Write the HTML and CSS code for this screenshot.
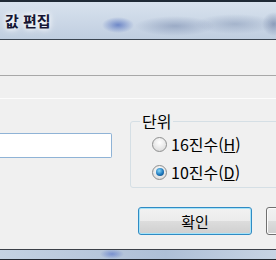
FILE: index.html
```html
<!DOCTYPE html>
<html lang="ko">
<head>
    <meta charset="UTF-8">
    <title>값 편집</title>
    <link rel="stylesheet" href="styles.css">
</head>
<body>
    <div class="window">
        <!-- 제목 표시줄 -->
        <div class="titlebar"><span class="title">값 편집</span></div>

        <div class="client">
            <div class="name-row"></div>
            <div class="label-row"></div>

            <div class="data-row">
                <input class="value-box" type="text" value="">
                <fieldset class="unit-group">
                    <legend>단위</legend>
                    <label class="option"><span class="radio"></span><span>16진수(<u>H</u>)</span></label>
                    <label class="option"><span class="radio checked"></span><span>10진수(<u>D</u>)</span></label>
                </fieldset>
            </div>

            <div class="button-row">
                <button class="btn default">확인</button>
                <button class="btn" aria-label="취소"></button>
            </div>
        </div>

        <div class="frame-bottom"></div>
    </div>
</body>
</html>
```

FILE: styles.css
```css
body {
    margin: 0;
    width: 276px;
    height: 260px;
    overflow: hidden;
    background: #f0f0f0;
    font-family: "Noto Sans CJK KR", "Noto Sans", sans-serif;
    color: #000;
}

.window {
    display: flex;
    flex-direction: column;
    width: 276px;
}

.titlebar {
    height: 37px;
    border-top: 2px solid #1f2a36;
    border-bottom: 1px solid #3a4450;
    display: flex;
    align-items: center;
    padding-left: 5px;
    background:
        radial-gradient(ellipse 16px 8px at 118px 23px, rgba(80, 110, 190, 0.75), transparent),
        radial-gradient(ellipse 40px 10px at 175px 24px, rgba(100, 120, 160, 0.45), transparent),
        radial-gradient(ellipse 40px 10px at 235px 22px, rgba(110, 130, 165, 0.4), transparent),
        radial-gradient(ellipse 12px 12px at 274px 22px, rgba(90, 110, 150, 0.55), transparent),
        linear-gradient(#d8e2ee, #c0cee0);
}

.title {
    font-size: 15px;
    font-weight: 700;
    color: #161634;
    text-shadow: 0 0 5px #fff, 0 0 8px #fff;
}

.client {
    display: flex;
    flex-direction: column;
}

.name-row {
    height: 35px;
    border-bottom: 1px solid #a8a8a8;
}

.label-row {
    height: 22px;
    border-bottom: 1px solid #fcfcfc;
}

.data-row {
    display: flex;
    align-items: flex-start;
    gap: 18px;
}

.value-box {
    margin: 34px 0 0 0;
    width: 112px;
    height: 25px;
    box-sizing: border-box;
    border: 1px solid #8fb3d6;
    border-left: none;
    border-radius: 0 2px 2px 0;
    background: #fff;
    padding: 0;
    flex: none;
}

.unit-group {
    margin: 14px 0 0 0;
    width: 200px;
    min-width: 0;
    flex: none;
    padding: 1px 0 1px 21px;
    border: 1px solid #d5dfe5;
    border-radius: 3px;
}

.unit-group legend {
    padding: 0 2px;
    margin-left: -12px;
    font-size: 16px;
    line-height: 16px;
}

.option {
    display: flex;
    align-items: center;
    gap: 4px;
    height: 28px;
    font-size: 16px;
    line-height: 28px;
}

.radio {
    width: 15px;
    height: 15px;
    box-sizing: border-box;
    border-radius: 50%;
    border: 1px solid #8e8f8f;
    background: radial-gradient(circle at 50% 35%, #fff, #e2e2e2 70%, #cdcdcd);
    display: flex;
    align-items: center;
    justify-content: center;
    flex: none;
}

.radio.checked::after {
    content: '';
    width: 8px;
    height: 8px;
    border-radius: 50%;
    background: radial-gradient(circle at 40% 35%, #8ad8f8, #1d78bd 55%, #0b3c6a);
}

.button-row {
    display: flex;
    gap: 14px;
    padding: 19px 0 0 138px;
}

.btn {
    flex: none;
    width: 114px;
    height: 28px;
    box-sizing: border-box;
    padding: 0;
    border: 1px solid #707070;
    border-radius: 3px;
    background: linear-gradient(#f2f2f2 0%, #ebebeb 50%, #dddddd 50%, #cfcfcf 100%);
    box-shadow: inset 0 0 0 1px #fcfcfc;
    font-family: inherit;
    font-size: 15px;
    color: #000;
}

.btn.default {
    border-color: #2f8bc4;
    box-shadow: inset 0 0 0 1px #a6e3f8;
}

.frame-bottom {
    margin-top: 14px;
    height: 9px;
    border-top: 1px solid #3c4048;
    border-bottom: 2px solid #222831;
    background:
        radial-gradient(ellipse 12px 5px at 112px 4px, rgba(80, 110, 200, 0.6), transparent),
        linear-gradient(90deg, #c4d2e2, #aebfd6 60%, #c8d4e4);
}
```
